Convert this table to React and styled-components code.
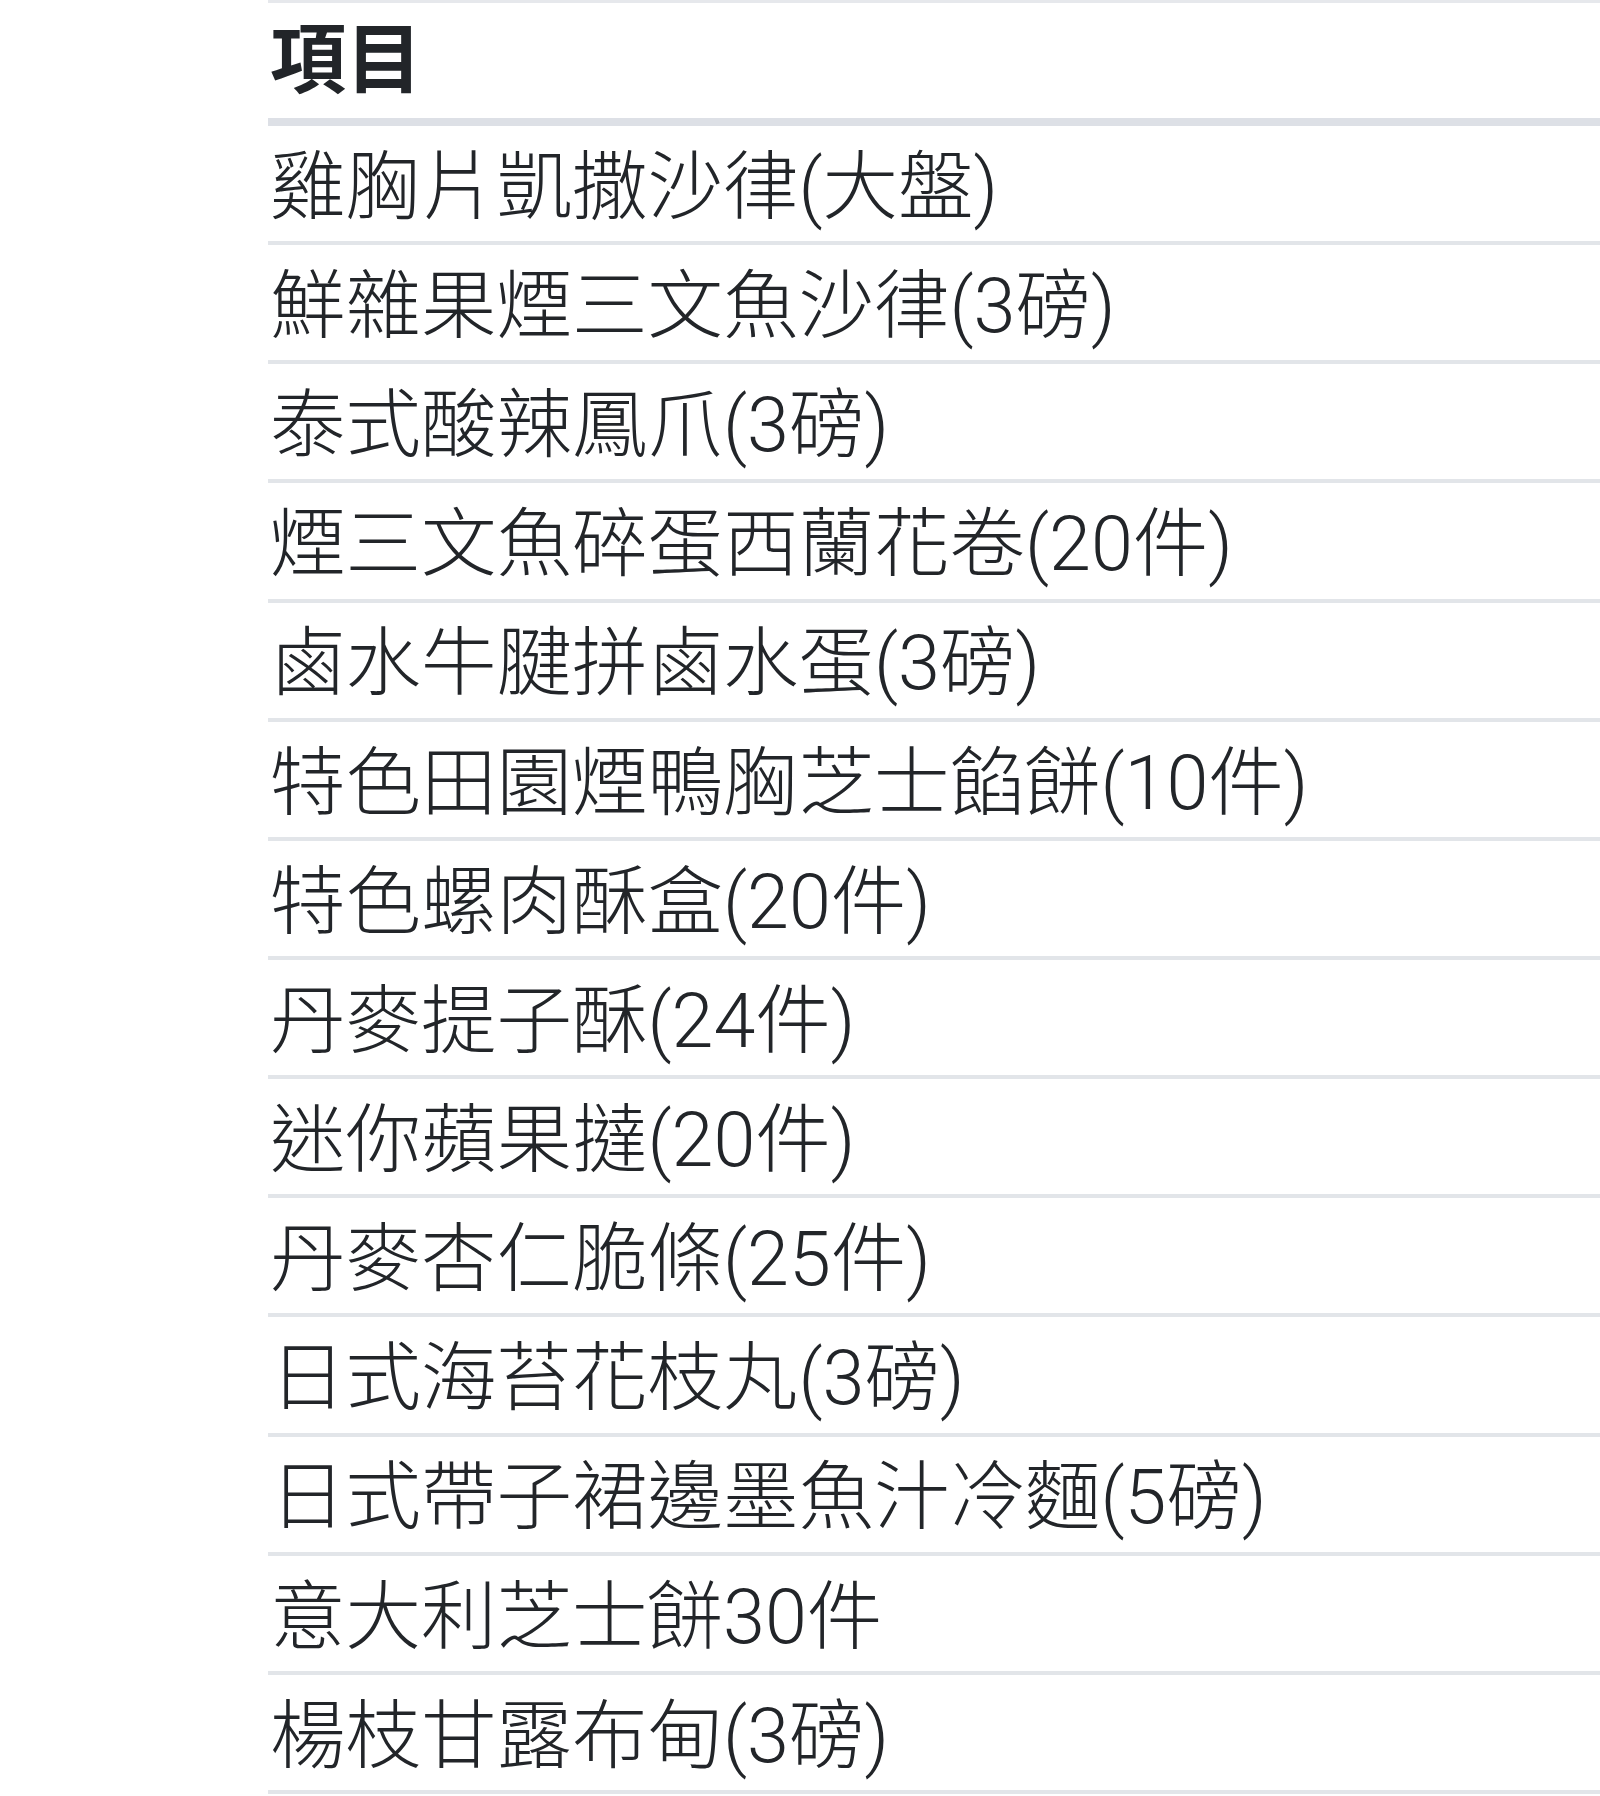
import React from 'react';
import styled, { createGlobalStyle } from 'styled-components';

const GlobalStyle = createGlobalStyle`
  html, body {
    margin: 0;
    padding: 0;
    background: #ffffff;
  }
  body {
    font-family: Roboto, "Noto Sans CJK TC", "Noto Sans CJK SC", sans-serif;
    color: #222529;
  }
`;

const Page = styled.div`
  padding-left: 268px;
  overflow: hidden;
`;

const Table = styled.div`
  display: flex;
  flex-direction: column;
  border-top: 3px solid #e6e8ec;
`;

const Row = styled.div`
  display: flex;
  align-items: center;
  height: ${(p) => (p.$head ? '115px' : '107.15px')};
  padding-top: ${(p) => (p.$head ? '0' : '8px')};
  padding-left: 2px;
  border-bottom: ${(p) => (p.$head ? '8px solid #dde0e6' : '4px solid #e2e5e9')};
  font-size: ${(p) => (p.$head ? '76px' : '75.5px')};
  font-weight: ${(p) => (p.$head ? 700 : 300)};
  line-height: 1;
  white-space: nowrap;
`;

const rows = [
  '雞胸片凱撒沙律(大盤)',
  '鮮雜果煙三文魚沙律(3磅)',
  '泰式酸辣鳳爪(3磅)',
  '煙三文魚碎蛋西蘭花卷(20件)',
  '鹵水牛腱拼鹵水蛋(3磅)',
  '特色田園煙鴨胸芝士餡餅(10件)',
  '特色螺肉酥盒(20件)',
  '丹麥提子酥(24件)',
  '迷你蘋果撻(20件)',
  '丹麥杏仁脆條(25件)',
  '日式海苔花枝丸(3磅)',
  '日式帶子裙邊墨魚汁冷麵(5磅)',
  '意大利芝士餅30件',
  '楊枝甘露布甸(3磅)',
];

export default function App() {
  return (
    <>
      <GlobalStyle />
      <Page>
        <Table>
          <Row $head>項目</Row>
          {rows.map((r) => (
            <Row key={r}>{r}</Row>
          ))}
        </Table>
      </Page>
    </>
  );
}
